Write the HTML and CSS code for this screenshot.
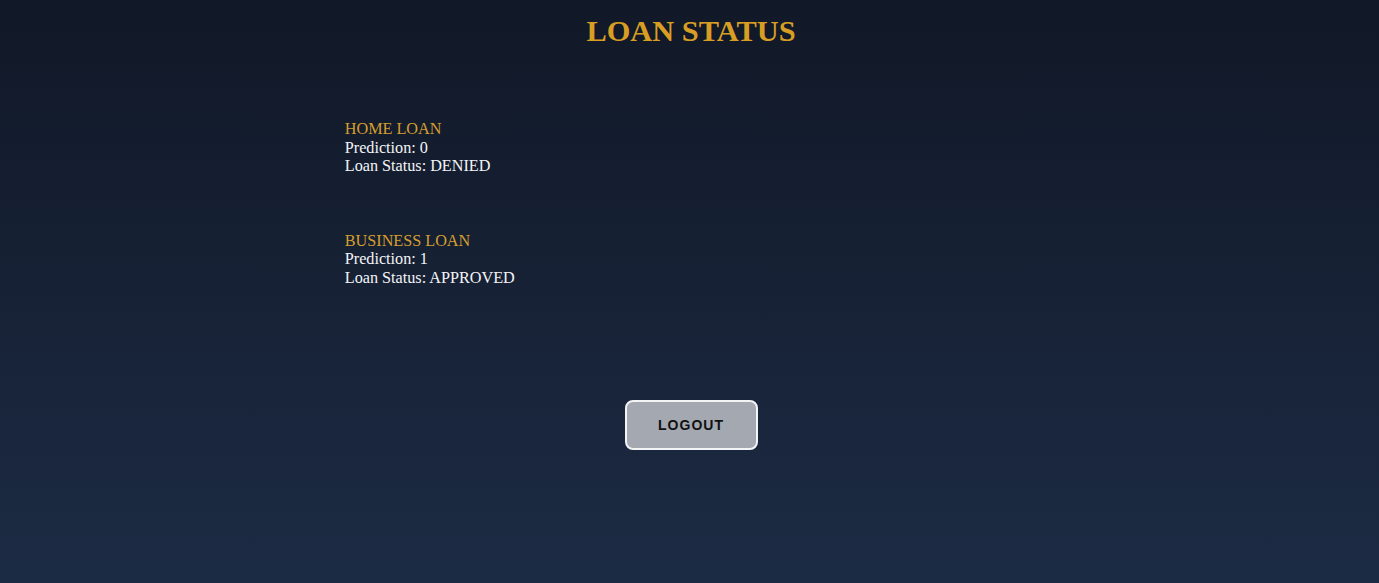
FILE: index.html
```html
<!DOCTYPE html>
<html lang="en">
<head>
<meta charset="utf-8">
<title>Loan Status</title>
<link rel="stylesheet" href="styles.css">
</head>
<body>
<main class="page">
  <h1 class="title">LOAN STATUS</h1>
  <section class="loans">
    <div class="loan">
      <div class="loan-name">HOME LOAN</div>
      <div class="loan-line">Prediction: 0</div>
      <div class="loan-line">Loan Status: DENIED</div>
    </div>
    <div class="loan">
      <div class="loan-name">BUSINESS LOAN</div>
      <div class="loan-line">Prediction: 1</div>
      <div class="loan-line">Loan Status: APPROVED</div>
    </div>
  </section>
  <div class="actions">
    <button class="logout" type="button">LOGOUT</button>
  </div>
</main>
</body>
</html>
```

FILE: styles.css
```css
html, body {
  margin: 0;
  padding: 0;
}

body {
  min-height: 100vh;
  background: linear-gradient(180deg, #111827 0%, #1c2b44 100%);
  font-family: "Liberation Serif", "Times New Roman", serif;
  color: #ffffff;
}

.page {
  display: flex;
  flex-direction: column;
}

.title {
  margin: 14px 0 0;
  padding-left: 3px;
  text-align: center;
  font-size: 30.4px;
  font-weight: bold;
  color: #d89e24;
}

.loans {
  display: flex;
  flex-direction: column;
  gap: 56px;
  margin-left: 25%;
  padding-top: 71px;
  font-size: 16.2px;
  line-height: 18.5px;
}

.loan-name {
  color: #d69e2e;
}

.loan-line {
  color: #f3f4f6;
}

.actions {
  display: flex;
  justify-content: center;
  padding-left: 3px;
  margin-top: 113px;
}

.logout {
  width: 133px;
  height: 50px;
  background: #a3a8b1;
  border: 2px solid #f3f4f6;
  border-radius: 8px;
  font-family: "Liberation Sans", Arial, sans-serif;
  font-weight: bold;
  font-size: 14px;
  letter-spacing: 1px;
  color: #111111;
  cursor: pointer;
}
```
